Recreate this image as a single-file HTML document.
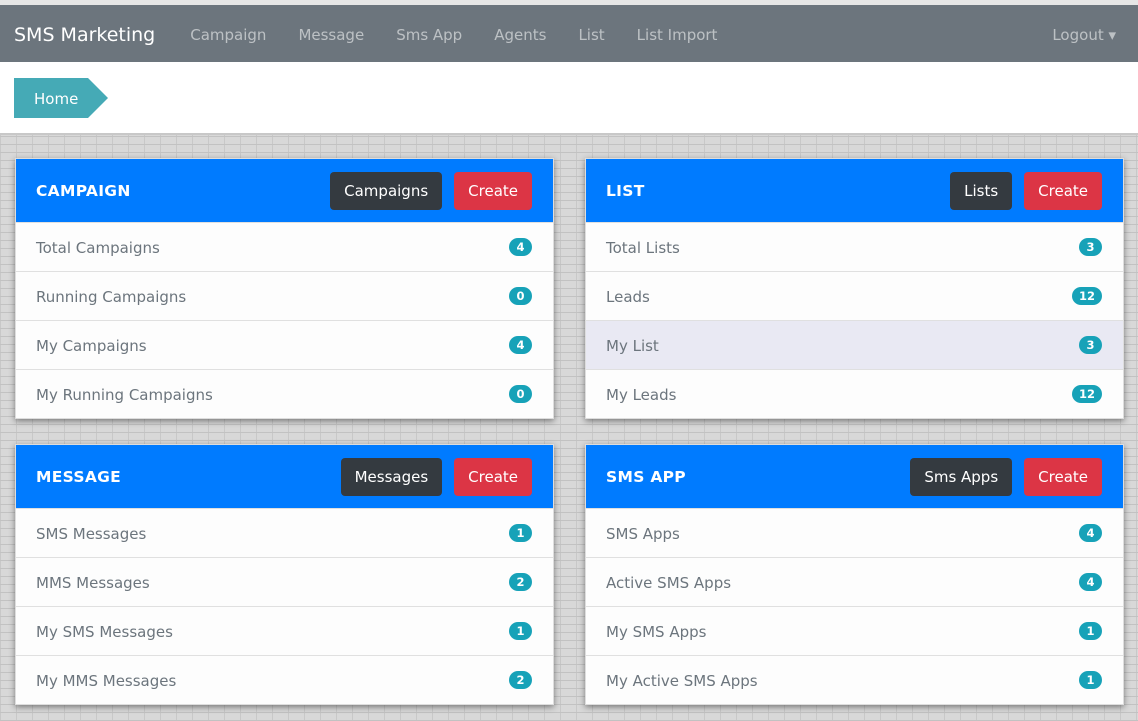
<!DOCTYPE html>
<html><head><meta charset="utf-8"><style>
*{box-sizing:border-box;margin:0;padding:0}
body{width:1138px;height:721px;overflow:hidden;font-family:"DejaVu Sans","Liberation Sans",sans-serif;background:#fff}
.top{height:5px;background:#e6e6e6}
.nav{height:57px;background:#6c757d;display:flex;align-items:center;padding:2px 14px 0;color:rgba(255,255,255,.55);font-size:15px}
.brand{color:#fff;font-size:19px;margin-right:35px}
.nav span.l{margin-right:32px}
.nav .lo{margin-left:auto;margin-right:8px}
.crumbwrap{height:72px;padding-top:16px;padding-left:14px}
.crumb{position:relative;display:inline-block;background:#45aab6;color:#fff;height:40px;line-height:42px;padding:0 20px;width:74px;font-size:15px}
.crumb:after{content:"";position:absolute;left:74px;top:0;border-left:20px solid #45aab6;border-top:20px solid transparent;border-bottom:20px solid transparent}
.bg{position:absolute;top:133px;left:0;width:1138px;height:588px;background-color:#d8d8d8;
background-image:repeating-linear-gradient(0deg,#c2c2c2 0 1px,transparent 1px 8px),repeating-linear-gradient(90deg,#c8c8c8 0 1px,transparent 1px 16px);border-top:2px solid #c8c8c8}
.card{position:absolute;width:539px;background:#fdfdfd;box-shadow:0 2px 6px rgba(0,0,0,.45);border:1px solid #ddd}
.hd{height:63px;background:#007bff;display:flex;align-items:center;padding:1px 21px 0 20px;color:#fff;font-weight:bold;font-size:15.5px}
.hd .t{flex:1;letter-spacing:.3px}
.btn{height:38px;line-height:38px;padding:0 14px;border-radius:4px;color:#fff;font-weight:normal;font-size:15px;margin-left:12px;margin-top:-1px}
.dk{background:#343a40}.rd{background:#dc3545}
.row{height:49px;border-top:1px solid #e0e0e0;display:flex;align-items:center;padding:2px 21px 0 20px;color:#6c757d;font-size:15px}
.row:first-of-type{border-top:none}
.row .t{flex:1}
.bd{background:#17a2b8;color:#fff;font-size:11.5px;font-weight:bold;border-radius:10px;padding:2px 7px;min-width:23px;text-align:center;margin-top:-2px}
.hl{background:#e9e9f3}
</style></head><body>
<div class="top"></div>
<div class="nav"><span class="brand">SMS Marketing</span><span class="l">Campaign</span><span class="l">Message</span><span class="l">Sms App</span><span class="l">Agents</span><span class="l">List</span><span class="l">List Import</span><span class="lo">Logout ▾</span></div>
<div class="crumbwrap"><span class="crumb">Home</span></div>
<div class="bg"></div>
<div class="card" style="left:15px;top:158px"><div class="hd"><span class="t">CAMPAIGN</span><span class="btn dk">Campaigns</span><span class="btn rd">Create</span></div>
<div class="row"><span class="t">Total Campaigns</span><span class="bd">4</span></div>
<div class="row"><span class="t">Running Campaigns</span><span class="bd">0</span></div>
<div class="row"><span class="t">My Campaigns</span><span class="bd">4</span></div>
<div class="row"><span class="t">My Running Campaigns</span><span class="bd">0</span></div></div>
<div class="card" style="left:585px;top:158px"><div class="hd"><span class="t">LIST</span><span class="btn dk">Lists</span><span class="btn rd">Create</span></div>
<div class="row"><span class="t">Total Lists</span><span class="bd">3</span></div>
<div class="row"><span class="t">Leads</span><span class="bd">12</span></div>
<div class="row hl"><span class="t">My List</span><span class="bd">3</span></div>
<div class="row"><span class="t">My Leads</span><span class="bd">12</span></div></div>
<div class="card" style="left:15px;top:444px"><div class="hd"><span class="t">MESSAGE</span><span class="btn dk">Messages</span><span class="btn rd">Create</span></div>
<div class="row"><span class="t">SMS Messages</span><span class="bd">1</span></div>
<div class="row"><span class="t">MMS Messages</span><span class="bd">2</span></div>
<div class="row"><span class="t">My SMS Messages</span><span class="bd">1</span></div>
<div class="row"><span class="t">My MMS Messages</span><span class="bd">2</span></div></div>
<div class="card" style="left:585px;top:444px"><div class="hd"><span class="t">SMS APP</span><span class="btn dk">Sms Apps</span><span class="btn rd">Create</span></div>
<div class="row"><span class="t">SMS Apps</span><span class="bd">4</span></div>
<div class="row"><span class="t">Active SMS Apps</span><span class="bd">4</span></div>
<div class="row"><span class="t">My SMS Apps</span><span class="bd">1</span></div>
<div class="row"><span class="t">My Active SMS Apps</span><span class="bd">1</span></div></div>
</body></html>
